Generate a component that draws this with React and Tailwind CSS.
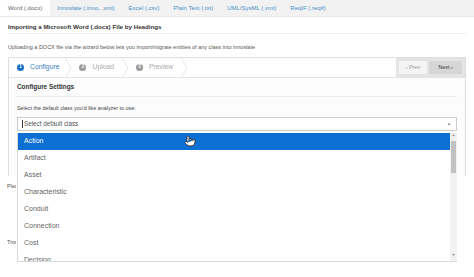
import React from "react";
import { Pointer } from "lucide-react";

const tabs = [
  "Word (.docx)",
  "Innoslate (.inno, .xml)",
  "Excel (.csv)",
  "Plain Text (.txt)",
  "UML/SysML (.xmi)",
  "ReqIF (.reqif)",
];

const steps = ["Configure", "Upload", "Preview"];

const classes = [
  "Action",
  "Artifact",
  "Asset",
  "Characteristic",
  "Conduit",
  "Connection",
  "Cost",
  "Decision",
];

const Chevron = () => (
  <svg width="7" height="20" viewBox="0 0 7 20" className="shrink-0">
    <polyline points="0,0 6,10 0,20" fill="none" stroke="#e6e6e6" strokeWidth="1" />
  </svg>
);

export default function App() {
  return (
    <div
      className="relative w-[474px] h-[277px] overflow-hidden bg-white text-[#333]"
      style={{ fontFamily: '"Liberation Sans", Arial, sans-serif' }}
    >
      {/* Tabs */}
      <div className="flex h-[17px] items-stretch bg-[#f2f2f2] border-b border-[#e8e8e8]">
        {tabs.map((t, i) => (
          <div
            key={t}
            className={`flex items-center text-[6px] ${
              i === 0 ? "bg-white pl-2 pr-2 text-[#666]" : "px-[7px] text-[#4a90c8]"
            }`}
          >
            {t}
          </div>
        ))}
      </div>

      <div className="px-2">
        {/* Title */}
        <div className="h-[17px] flex items-end pb-[2px] border-b border-[#eeeeee] text-[6.2px] font-bold text-[#333]">
          Importing a Microsoft Word (.docx) File by Headings
        </div>
        <div className="h-[23px] flex items-center pt-[4px] text-[5.5px] text-[#555]">
          Uploading a DOCX file via the wizard below lets you import/migrate entities of any class into innoslate
        </div>

        {/* Wizard */}
        <div className="border border-[#dddddd] h-[119px] bg-white">
          <div className="flex h-[20px] items-center border-b border-[#e5e5e5]">
            {steps.map((s, i) => (
              <div key={s} className="flex items-center">
                <div className={`flex items-center gap-[6px] ${i === 0 ? "pl-[8px] pr-[6px]" : "pl-[7px] pr-[8px]"}`}>
                  <span
                    className={`w-[7px] h-[7px] rounded-full flex items-center justify-center text-[4.5px] font-bold text-white ${
                      i === 0 ? "bg-[#1b6fc2]" : "bg-[#9a9a9a]"
                    }`}
                  >
                    {i + 1}
                  </span>
                  <span className={`text-[6.8px] ${i === 0 ? "text-[#3a7fc0]" : "text-[#aaaaaa]"}`}>{s}</span>
                </div>
                <Chevron />
              </div>
            ))}
            <div className="ml-auto h-[19px] w-[69px] bg-[#e4e4e4] flex items-center gap-[2px] px-[3px]">
              <div className="h-[13px] w-[28px] bg-[#f4f4f4] flex items-center justify-center text-[5.5px] text-[#999]">
                ‹ Prev
              </div>
              <div className="h-[13px] flex-1 bg-[#d6d6d6] flex items-center justify-center text-[5.5px] text-[#333]">
                Next ›
              </div>
            </div>
          </div>

          <div className="px-[8px] bg-[#fcfcfc] h-[98px]">
            <div className="h-[19px] flex items-end pb-[4px] border-b border-[#ececec] text-[6.4px] font-bold">
              Configure Settings
            </div>
            <div className="h-[19px] flex items-center pt-[3px] text-[5.4px] text-[#444]">
              Select the default class you'd like analyzer to use:
            </div>
            <div className="mt-px h-[14px] border border-[#cccccc] bg-white flex items-center pl-[4px] pr-[5px] text-[6.3px] text-[#555]">
              <span className="w-px h-[8px] bg-[#333] mr-px" />
              Select default class
              <span className="ml-auto text-[4px] text-[#777]">▲</span>
            </div>
          </div>
        </div>

        <div className="h-[21px] w-[9px] overflow-hidden whitespace-nowrap flex items-center text-[5.5px] text-[#555] -ml-px">
          Please select
        </div>
        <div className="h-[41px]" />
        <div className="w-[9px] overflow-hidden whitespace-nowrap text-[5.5px] text-[#555] -ml-px">
          Troubleshooting
        </div>
      </div>

      {/* Dropdown list */}
      <div className="absolute left-[17px] top-[133px] w-[440px] h-[129px] bg-white border-b border-l border-[#d8d8d8] overflow-hidden flex">
        <div className="flex-1">
          {classes.map((c, i) => (
            <div
              key={c}
              className={`h-[17px] flex items-center pl-[6px] text-[7px] ${
                i === 0 ? "bg-[#0b6fd4] text-white" : "text-[#666]"
              }`}
            >
              {c}
            </div>
          ))}
        </div>
        <div className="w-[7px] bg-[#f1f1f1] flex flex-col items-center">
          <span className="text-[3.5px] text-[#777] leading-none mt-[1px]">▲</span>
          <div className="mt-[3px] w-[5px] h-[32px] bg-[#c1c1c1]" />
          <span className="mt-auto mb-[4px] text-[3.5px] text-[#777] leading-none">▼</span>
        </div>
      </div>

      {/* Cursor */}
      <div className="absolute left-[184px] top-[135px]">
        <Pointer size={12} fill="white" stroke="#222" strokeWidth={1.6} />
      </div>
    </div>
  );
}
